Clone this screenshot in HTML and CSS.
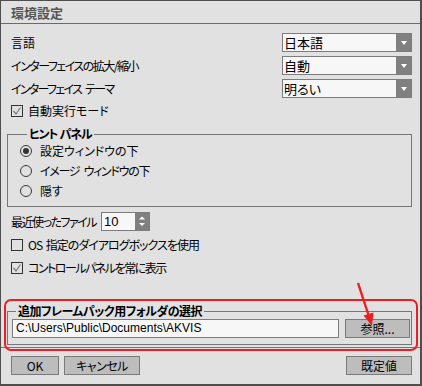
FILE: index.html
```html
<!DOCTYPE html>
<html lang="ja">
<head>
<meta charset="utf-8">
<title>環境設定</title>
<link rel="stylesheet" href="styles.css">
</head>
<body>
<div class="window">
  <div class="titlebar">環境設定</div>
  <div class="content">
    <div class="row">
      <span class="label">言語</span>
      <div class="select"><span class="select-text">日本語</span><span class="select-arrow"><span class="tri"></span></span></div>
    </div>
    <div class="row">
      <span class="label t15">インターフェイスの拡大/縮小</span>
      <div class="select"><span class="select-text">自動</span><span class="select-arrow"><span class="tri"></span></span></div>
    </div>
    <div class="row">
      <span class="label t17">インターフェイス テーマ</span>
      <div class="select"><span class="select-text">明るい</span><span class="select-arrow"><span class="tri"></span></span></div>
    </div>
    <div class="row check-row first-check">
      <span class="checkbox"><svg width="10" height="10" viewBox="0 0 10 10"><polyline points="1.5,5 4,8 8.5,1.5" fill="none" stroke="#7a7a7a" stroke-width="1.2"/></svg></span>
      <span class="label">自動実行モード</span>
    </div>
    <fieldset class="group hint">
      <legend class="legend hint-legend">ヒント パネル</legend>
      <div class="radio-row"><span class="radio checked"></span><span class="label">設定ウィンドウの下</span></div>
      <div class="radio-row"><span class="radio"></span><span class="label t13">イメージ ウィンドウの下</span></div>
      <div class="radio-row"><span class="radio"></span><span class="label">隠す</span></div>
    </fieldset>
    <div class="row recent">
      <span class="label t15 recent-label">最近使ったファイル</span>
      <div class="spin"><span class="spin-text">10</span><span class="spin-arrows"><svg width="6" height="11" viewBox="0 0 6 11"><polygon points="0,3.5 3,0.5 6,3.5" fill="#fff"/><polygon points="0,7 3,10 6,7" fill="#fff"/></svg></span></div>
    </div>
    <div class="row check-row">
      <span class="checkbox"></span>
      <span class="label t1">OS 指定のダイアログボックスを使用</span>
    </div>
    <div class="row check-row">
      <span class="checkbox"><svg width="10" height="10" viewBox="0 0 10 10"><polyline points="1.5,5 4,8 8.5,1.5" fill="none" stroke="#7a7a7a" stroke-width="1.2"/></svg></span>
      <span class="label t15">コントロールパネルを常に表示</span>
    </div>
    <fieldset class="group folder">
      <legend class="legend folder-legend">追加フレームパック用フォルダの選択</legend>
      <div class="folder-row">
        <div class="path-input">C:\Users\Public\Documents\AKVIS</div>
        <div class="button browse">参照...</div>
      </div>
    </fieldset>
  </div>
  <div class="footer">
    <div class="button ok">OK</div>
    <div class="button cancel">キャンセル</div>
    <div class="spacer"></div>
    <div class="button defaults">既定値</div>
  </div>
  <div class="highlight"></div>
  <svg class="arrow" width="422" height="386" viewBox="0 0 422 386">
    <line x1="358" y1="283" x2="368.5" y2="315" stroke="#ea1f25" stroke-width="2.4"/>
    <polygon points="372,326 363.5,315.5 373.5,312.5" fill="#ea1f25"/>
  </svg>
</div>
</body>
</html>
```

FILE: styles.css
```css
* { box-sizing: border-box; }
html, body { margin: 0; padding: 0; }
body {
  width: 422px;
  height: 386px;
  background: #e1e1e1;
  font-family: "Noto Sans CJK JP", "Noto Sans", sans-serif;
  font-size: 12px;
  color: #000;
  overflow: hidden;
}
.window {
  position: relative;
  width: 422px;
  height: 386px;
  background: #e1e1e1;
  border-top: 1px solid #4e4e4e;
  border-left: 1px solid #4e4e4e;
  border-right: 2px solid #4e4e4e;
  border-bottom: 2px solid #4e4e4e;
}
.titlebar {
  height: 23px;
  line-height: 23px;
  padding-left: 10px;
  font-weight: bold;
  font-size: 13px;
  color: #555;
  border-bottom: 1px solid #6a6a6a;
}
.content {
  padding: 9px 8px 0 6px;
  display: flex;
  flex-direction: column;
}
.label {
  white-space: nowrap;
  font-feature-settings: "palt";
  line-height: 14px;
}
.t1 { letter-spacing: -1px; word-spacing: 2px; }
.t13 { letter-spacing: -1.3px; word-spacing: 3px; }
.t15 { letter-spacing: -1.5px; }
.t17 { letter-spacing: -1.7px; word-spacing: 3px; }
.row {
  height: 19px;
  display: flex;
  align-items: center;
  justify-content: space-between;
  padding-left: 4px;
  margin-bottom: 4px;
}
.select {
  width: 130px;
  height: 19px;
  display: flex;
  border: 1px solid #7c7c7c;
  background: #f7f7f7;
}
.select-text {
  flex: 1;
  padding-left: 1px;
  font-size: 13px;
  line-height: 17px;
  font-feature-settings: "palt";
}
.select-arrow {
  width: 15px;
  background: #808080;
  display: flex;
  align-items: center;
  justify-content: center;
}
.tri {
  width: 0;
  height: 0;
  border-left: 3.5px solid transparent;
  border-right: 3.5px solid transparent;
  border-top: 4px solid #fff;
}
.check-row {
  justify-content: flex-start;
  gap: 5px;
}
.first-check { margin-top: -1px; }
.checkbox {
  width: 12px;
  height: 12px;
  border: 1px solid #333;
  display: flex;
  align-items: center;
  justify-content: center;
  flex: none;
}
.group {
  margin: 0;
  border: 1px solid #767676;
  min-inline-size: 0;
}
.legend {
  font-weight: bold;
  line-height: 14px;
  padding: 0 2px;
  white-space: nowrap;
  font-feature-settings: "palt";
}
.hint {
  margin-top: 3px;
  padding: 0 4px 5px 12px;
}
.hint-legend {
  margin-left: 7px;
  letter-spacing: -1.2px;
  word-spacing: 1px;
}
.radio-row {
  height: 20px;
  display: flex;
  align-items: center;
  gap: 8px;
}
.radio {
  width: 12px;
  height: 12px;
  border-radius: 50%;
  border: 1px solid #3a3a3a;
  display: flex;
  align-items: center;
  justify-content: center;
  flex: none;
}
.radio.checked::after {
  content: "";
  width: 6px;
  height: 6px;
  border-radius: 50%;
  background: #333;
}
.recent {
  margin-top: 5px;
  justify-content: flex-start;
}
.recent-label { width: 90px; }
.spin {
  width: 49px;
  height: 19px;
  display: flex;
  border: 1px solid #7c7c7c;
  background: #f7f7f7;
}
.spin-text {
  flex: 1;
  padding-left: 2px;
  font-family: "Liberation Sans", sans-serif;
  font-size: 13px;
  line-height: 17px;
}
.spin-arrows {
  width: 14px;
  background: #808080;
  display: flex;
  align-items: center;
  justify-content: center;
}
.folder {
  margin-top: 23px;
  padding: 1px 1px 6px 4px;
}
.folder-legend {
  margin-left: 4px;
  letter-spacing: -0.5px;
}
.folder-row {
  display: flex;
  gap: 6px;
}
.path-input {
  width: 327px;
  height: 19px;
  border: 1px solid #7c7c7c;
  background: #f7f7f7;
  padding-left: 3px;
  font-family: "Liberation Sans", sans-serif;
  font-size: 12px;
  line-height: 17px;
  white-space: nowrap;
}
.button {
  height: 19px;
  border: 1px solid #7a7a7a;
  background: #bdbdbd;
  text-align: center;
  line-height: 17px;
  white-space: nowrap;
  font-feature-settings: "palt";
}
.browse { width: 65px; }
.footer {
  margin-top: 2px;
  border-top: 1px solid #767676;
  padding: 8px 8px 0 10px;
  display: flex;
  gap: 5px;
}
.ok { width: 48px; }
.cancel { width: 76px; letter-spacing: -0.5px; }
.spacer { flex: 1; }
.defaults { width: 66px; }
.highlight {
  position: absolute;
  left: 3px;
  top: 298px;
  width: 414px;
  height: 52px;
  border: 2px solid #ea1f25;
  border-radius: 7px;
  pointer-events: none;
}
.arrow {
  position: absolute;
  left: -1px;
  top: -1px;
  pointer-events: none;
}
```
